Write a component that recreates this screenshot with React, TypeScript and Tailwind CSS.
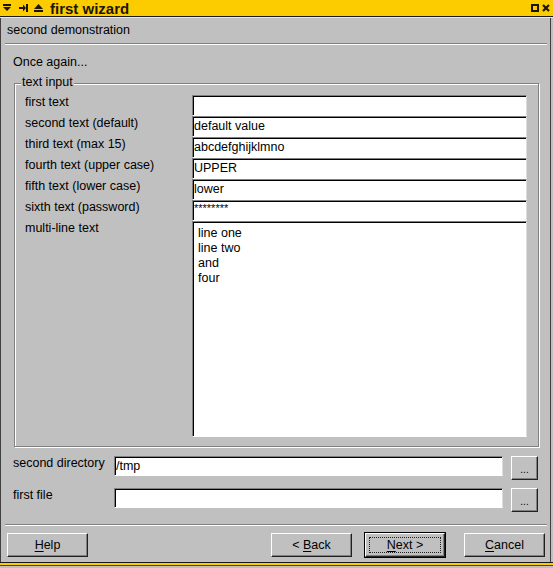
import React from "react";

const FONT = { fontFamily: '"Liberation Sans", Arial, Helvetica, sans-serif' };

const FIELDS = [
  { label: "first text", value: "" },
  { label: "second text (default)", value: "default value" },
  { label: "third text (max 15)", value: "abcdefghijklmno" },
  { label: "fourth text (upper case)", value: "UPPER" },
  { label: "fifth text (lower case)", value: "lower" },
  { label: "sixth text (password)", value: "********", small: true },
];

const sunken =
  "bg-white border border-t-[#808080] border-l-[#808080] border-b-white border-r-[#dcdcdc] shadow-[inset_1px_1px_0_#000]";
const raised =
  "border border-t-white border-l-white border-b-[#202020] border-r-[#202020] shadow-[inset_-1px_-1px_0_#808080] bg-[#c0c0c0]";

function TitleBar() {
  return (
    <div className="flex h-[17px] items-center border-b border-[#1a1a1a] bg-[#fccc00] text-[#1c1600]">
      <svg width="8" height="8" viewBox="0 0 8 8" className="ml-[3px]">
        <rect x="0" y="0" width="8" height="2" fill="currentColor" />
        <path d="M0 3h8L4 7z" fill="currentColor" />
      </svg>
      <svg width="9" height="8" viewBox="0 0 9 8" className="ml-[8px]">
        <rect x="0" y="3" width="5" height="2" fill="currentColor" />
        <path d="M4 0.5L7 4L4 7.5z" fill="currentColor" />
        <rect x="7" y="0" width="2" height="8" fill="currentColor" />
      </svg>
      <svg width="9" height="8" viewBox="0 0 9 8" className="ml-[6px]">
        <path d="M4.5 0L9 5H0z" fill="currentColor" />
        <rect x="0" y="6" width="9" height="2" fill="currentColor" />
      </svg>
      <span className="ml-[7px] text-[15px] font-bold leading-none">first wizard</span>
      <div className="flex-1" />
      <svg width="8" height="8" viewBox="0 0 8 8">
        <rect x="1" y="1" width="6" height="6" fill="none" stroke="currentColor" strokeWidth="2" />
      </svg>
      <svg width="8" height="8" viewBox="0 0 8 8" className="ml-[3px] mr-[3px]">
        <path d="M1 1L7 7M7 1L1 7" stroke="currentColor" strokeWidth="2.2" />
      </svg>
    </div>
  );
}

function Separator() {
  return <div className="ml-[5px] mr-[6px] h-[2px] border-t border-b border-t-[#808080] border-b-white" />;
}

function Field({ value, small }: { value: string; small?: boolean }) {
  return (
    <div className={`${sunken} flex h-[21px] w-[335px] pl-[1px] ${small ? "items-start pt-[2px]" : "items-center"}`}>
      <span className={small ? "text-[11px] leading-none" : "leading-none"}>{value}</span>
    </div>
  );
}

function Button({ children, width, isDefault }: { children: React.ReactNode; width: string; isDefault?: boolean }) {
  if (isDefault) {
    return (
      <div className={`${width} h-[26px] border border-black`}>
        <div className={`${raised} flex h-full w-full items-center justify-center p-[3px]`}>
          <div className="flex h-full w-full items-center justify-center border border-dotted border-[#202020]">
            {children}
          </div>
        </div>
      </div>
    );
  }
  return <div className={`${raised} ${width} flex h-[24px] items-center justify-center`}>{children}</div>;
}

export default function App() {
  return (
    <div
      className="relative flex h-[568px] w-[553px] flex-col overflow-hidden bg-[#c0c0c0] text-[12.5px] text-black shadow-[inset_1px_0_0_#404040,inset_-2px_0_0_#c0c0c0,inset_-3px_0_0_#404040]"
      style={FONT}
    >
      <TitleBar />
      <div className="h-px bg-[#e8e8e8]" />

      {/* page header */}
      <div className="flex h-[25px] items-center pl-[7px] leading-[15px]">second demonstration</div>
      <Separator />

      <div className="mt-[10px] pl-[13px] leading-[15px]">Once again...</div>

      {/* group box */}
      <div className="relative ml-[14px] mt-[13px] flex h-[364px] w-[525px] flex-col border border-[#808080] pb-[9px] pl-[10px] pr-[10px] pt-[11px] shadow-[inset_1px_1px_0_#fff,1px_1px_0_#fff]">
        <span className="absolute -top-[9px] left-[6px] bg-[#c0c0c0] px-[1px] leading-[15px]">text input</span>
        {FIELDS.map((f) => (
          <div key={f.label} className="flex h-[21px] items-start">
            <div className="w-[167px] leading-[14px]">{f.label}</div>
            <Field value={f.value} small={f.small} />
          </div>
        ))}
        <div className="flex flex-1 items-start">
          <div className="w-[167px] leading-[14px]">multi-line text</div>
          <div className={`${sunken} h-full w-[335px] pl-[5px] pt-[4px] leading-[15px]`}>
            <div>line one</div>
            <div>line two</div>
            <div>and</div>
            <div>four</div>
          </div>
        </div>
      </div>

      {/* directory / file pickers */}
      <div className="mt-[9px] flex h-[24px] items-start">
        <div className="w-[114px] pl-[13px] leading-[14px]">second directory</div>
        <div className={`${sunken} flex h-[20px] w-[389px] items-center pl-[1px] leading-none`}>/tmp</div>
        <div className={`${raised} ml-[8px] flex h-[24px] w-[27px] items-center justify-center pt-[3px] text-[10px]`}>...</div>
      </div>
      <div className="mt-[8px] flex h-[24px] items-start">
        <div className="w-[114px] pl-[13px] leading-[14px]">first file</div>
        <div className={`${sunken} h-[20px] w-[389px]`} />
        <div className={`${raised} ml-[8px] flex h-[24px] w-[27px] items-center justify-center pt-[3px] text-[10px]`}>...</div>
      </div>

      <div className="mt-[12px]">
        <Separator />
      </div>

      {/* wizard buttons */}
      <div className="mt-[6px] flex items-center pl-[7px] pr-[8px]">
        <Button width="w-[81px]">
          <span><u className="underline-offset-2">H</u>elp</span>
        </Button>
        <div className="flex-1" />
        <Button width="w-[81px]">
          <span>&lt; <u className="underline-offset-2">B</u>ack</span>
        </Button>
        <div className="ml-[12px]">
          <Button width="w-[82px]" isDefault>
            <span><u className="underline-offset-2">N</u>ext &gt;</span>
          </Button>
        </div>
        <div className="ml-[18px]">
          <Button width="w-[81px]">
            <span><u className="underline-offset-2">C</u>ancel</span>
          </Button>
        </div>
      </div>

      {/* bottom frame */}
      <div className="mt-auto h-[6px] border-t border-[#1a1a1a] bg-[#fccc00] shadow-[inset_0_-2px_0_#c0c0c0,inset_0_-3px_0_#404040]" />
    </div>
  );
}
